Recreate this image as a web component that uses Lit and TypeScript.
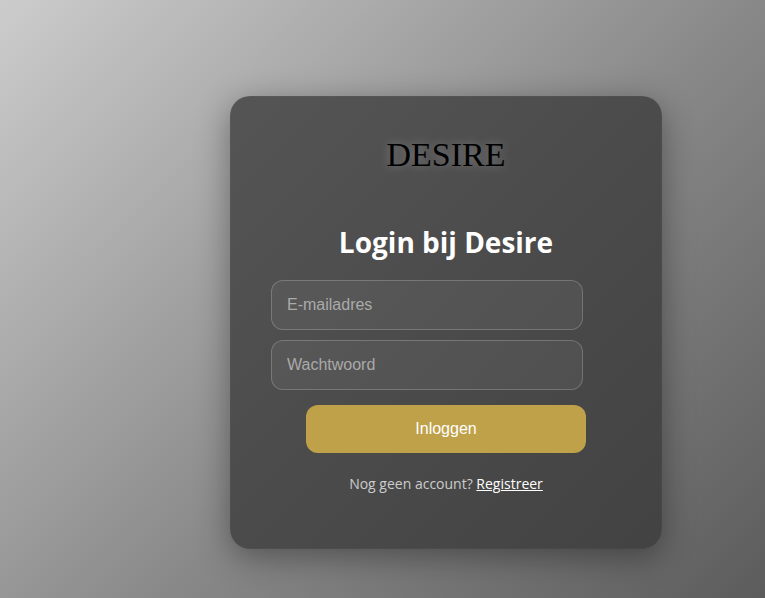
import { LitElement, html, css } from "lit";
import { customElement } from "lit/decorators.js";

@customElement("app-root")
export class AppRoot extends LitElement {
  static styles = css`
    :host {
      display: block;
      font-family: "Open Sans", "Noto Sans", sans-serif;
      color: #fff;
    }
    .page {
      box-sizing: border-box;
      min-height: 100vh;
      display: flex;
      align-items: center;
      justify-content: center;
      padding: 47px 0 0 127px;
      background: linear-gradient(135deg, #ccc, #888 56%, #5c5c5c);
    }
    .card {
      box-sizing: border-box;
      width: 100%;
      max-width: 432px;
      padding: 40px;
      border: 1px solid rgba(255, 255, 255, 0.02);
      border-radius: 20px;
      background: rgba(55, 55, 55, 0.75);
      box-shadow: 0 8px 32px rgba(0, 0, 0, 0.37);
      display: flex;
      flex-direction: column;
      align-items: center;
    }
    .logo {
      font: 34px/36px "Liberation Serif", serif;
      color: #000;
      text-shadow: 0 0 10px rgba(255, 255, 255, 0.3);
    }
    .title {
      margin: 49px 0 18px;
      font-size: 28px;
      line-height: 40px;
      font-weight: 700;
    }
    .form {
      align-self: stretch;
      display: flex;
      flex-direction: column;
      gap: 10px;
    }
    .field {
      box-sizing: border-box;
      width: 100%;
      max-width: 312px;
      height: 50px;
      padding: 0 15px;
      border: 1px solid rgba(255, 255, 255, 0.2);
      border-radius: 12px;
      background: rgba(255, 255, 255, 0.05);
      color: #fff;
      font: 16px "Liberation Sans", sans-serif;
    }
    .field::placeholder {
      color: #aaa;
      opacity: 1;
    }
    .submit {
      align-self: center;
      width: 80%;
      height: 48px;
      margin-top: 5px;
      padding: 0;
      border: 0;
      border-radius: 12px;
      background: #bfa14a;
      color: #fff;
      font: 16px "Liberation Sans", sans-serif;
      cursor: pointer;
    }
    .hint {
      margin: 20px 0 13px;
      font-size: 14px;
      line-height: 22px;
      color: #ccc;
    }
    .link {
      color: #fff;
      text-decoration: underline;
    }
  `;

  render() {
    return html`
      <main class="page">
        <section class="card">
          <div class="logo">DESIRE</div>
          <h1 class="title">Login bij Desire</h1>
          <form class="form" @submit=${(e: Event) => e.preventDefault()}>
            <input class="field" type="email" placeholder="E-mailadres" aria-label="E-mailadres" />
            <input class="field" type="password" placeholder="Wachtwoord" aria-label="Wachtwoord" />
            <button class="submit" type="submit">Inloggen</button>
          </form>
          <p class="hint">Nog geen account? <a class="link" href="#">Registreer</a></p>
        </section>
      </main>
    `;
  }
}
